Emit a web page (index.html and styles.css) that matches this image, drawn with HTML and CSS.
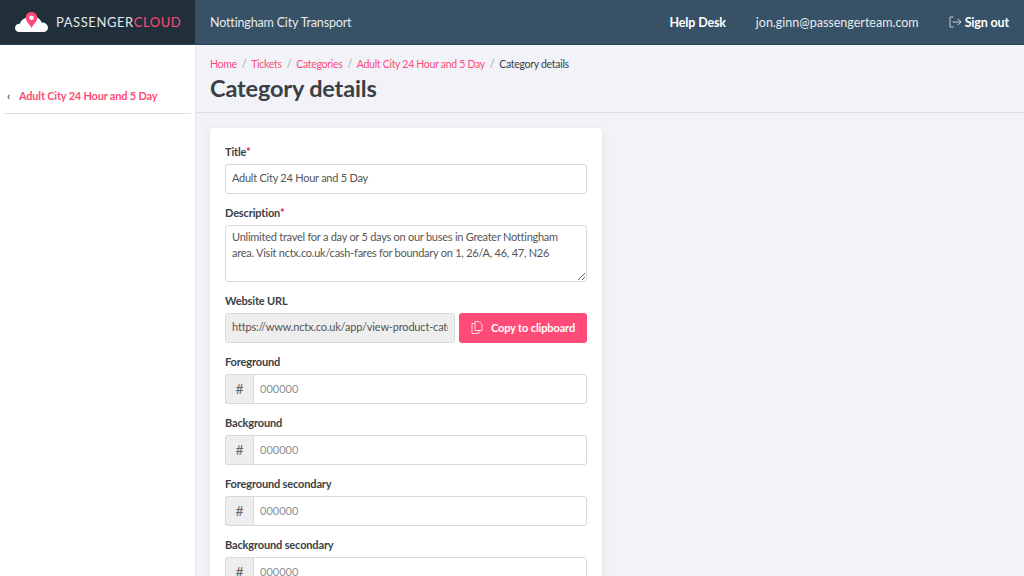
FILE: index.html
```html
<!DOCTYPE html>
<html lang="en">
    <head>
        <meta charset="UTF-8" />
        <meta name="viewport" content="width=device-width, initial-scale=1.0" />
        <title>Category details</title>
        <link rel="stylesheet" href="styles.css">
    </head>
    <body>
        <header class="topbar">
            <a class="brand" href="#">
                <svg class="brand-logo" width="36" height="24" viewBox="0 0 36 24">
                    <path d="M4.500 22 C1.500 22 0 20 0 18 C0 15.500 2 13.500 4.800 13.700 C6 10 9 8 12 7.500 L22 7.500 C24.500 8.500 26 10.500 26.500 12.500 C30 12 33 14.500 33 18 C33 20.300 31 22 28.500 22 Z" fill="#fff"/>
                    <path d="M16.500 2 C13 2 10.700 4.700 10.700 7.700 C10.700 11.500 15 14.500 16.500 18 C18 14.500 22.300 11.500 22.300 7.700 C22.300 4.700 20 2 16.500 2 Z" fill="#ff4b78"/>
                    <circle cx="16.500" cy="7.700" r="2.300" fill="#fff"/>
                </svg>
                <span class="brand-name">PASSENGER<span class="brand-cloud">CLOUD</span></span>
            </a>
            <div class="topbar-main">
                <span class="org-name">Nottingham City Transport</span>
                <nav class="topbar-nav">
                    <a class="nav-strong" href="#">Help Desk</a>
                    <span class="nav-user">jon.ginn@passengerteam.com</span>
                    <a class="nav-strong nav-signout" href="#">
                        <svg width="13" height="12" viewBox="0 0 13 12" fill="none" stroke="#fff" stroke-width="0.9" stroke-opacity="0.8">
                            <path d="M4.500 1 H1 V11 H4.500"/>
                            <path d="M3.500 6 H12 M8.800 2.800 L12 6 L8.800 9.200"/>
                        </svg>
                        Sign out
                    </a>
                </nav>
            </div>
        </header>
        <div class="layout">
            <aside class="sidebar">
                <a class="side-link" href="#"><span class="side-arrow">&lsaquo;</span>Adult City 24 Hour and 5 Day</a>
            </aside>
            <main class="content">
                <div class="page-head">
                    <ol class="crumbs">
                        <li><a href="#">Home</a></li>
                        <li><a href="#">Tickets</a></li>
                        <li><a href="#">Categories</a></li>
                        <li><a href="#">Adult City 24 Hour and 5 Day</a></li>
                        <li>Category details</li>
                    </ol>
                    <h1>Category details</h1>
                </div>
                <form class="card">
                    <div class="field">
                        <label>Title<span class="req">*</span></label>
                        <input class="input" type="text" value="Adult City 24 Hour and 5 Day" />
                    </div>
                    <div class="field">
                        <label>Description<span class="req">*</span></label>
                        <textarea class="input area">Unlimited travel for a day or 5 days on our buses in Greater Nottingham area. Visit nctx.co.uk/cash-fares for boundary on 1, 26/A, 46, 47, N26</textarea>
                    </div>
                    <div class="field">
                        <label>Website URL</label>
                        <div class="url-row">
                            <input class="input readonly" type="text" readonly value="https://www.nctx.co.uk/app/view-product-categories" />
                            <button class="copy" type="button">
                                <svg width="12" height="13" viewBox="0 0 12 13" fill="none" stroke="#fff" stroke-width="0.9" stroke-opacity="0.85">
                                    <path d="M4 0.500 H8 L11 3.500 V9.500 H4 Z"/>
                                    <path d="M4 2.500 H1 V12.500 H8 V9.500"/>
                                </svg>
                                Copy to clipboard
                            </button>
                        </div>
                    </div>
                    <div class="field">
                        <label>Foreground</label>
                        <div class="group"><span class="hash">#</span><input class="input" type="text" placeholder="000000" /></div>
                    </div>
                    <div class="field">
                        <label>Background</label>
                        <div class="group"><span class="hash">#</span><input class="input" type="text" placeholder="000000" /></div>
                    </div>
                    <div class="field">
                        <label>Foreground secondary</label>
                        <div class="group"><span class="hash">#</span><input class="input" type="text" placeholder="000000" /></div>
                    </div>
                    <div class="field">
                        <label>Background secondary</label>
                        <div class="group"><span class="hash">#</span><input class="input" type="text" placeholder="000000" /></div>
                    </div>
                </form>
            </main>
        </div>
    </body>
</html>
```

FILE: styles.css
```css
* {
    box-sizing: border-box;
}
html, body {
    height: 100%;
    overflow: hidden;
}
body {
    margin: 0;
    font-family: Lato, Arial, sans-serif;
    font-size: 12px;
    color: #3b4046;
    background-color: #f1f3f8;
}
a {
    text-decoration: none;
    color: #ff4b78;
}
.topbar {
    display: flex;
    height: 45px;
    background-color: #375166;
    border-bottom: 1px solid #2f4557;
}
.brand {
    display: flex;
    align-items: center;
    gap: 5px;
    width: 195px;
    padding-left: 15px;
    background-color: #212f3b;
}
.brand-name {
    font-size: 13px;
    letter-spacing: 0.570px;
    color: #e4e7ea;
}
.brand-cloud {
    color: #ff4b78;
}
.topbar-main {
    flex: 1;
    display: flex;
    align-items: center;
    justify-content: space-between;
    padding: 0 15px;
    color: #e6eaee;
    font-size: 12.500px;
}
.org-name {
    letter-spacing: -0.160px;
}
.topbar-nav {
    display: flex;
    align-items: center;
    gap: 30px;
}
.nav-strong {
    color: #fff;
    font-weight: 700;
    letter-spacing: -0.150px;
}
.nav-signout {
    display: flex;
    align-items: center;
    gap: 3px;
}
.layout {
    display: flex;
    height: 531px;
}
.sidebar {
    width: 196px;
    padding: 38px 4px 0;
    background-color: #fff;
    border-right: 1px solid #e4e6ea;
}
.side-link {
    display: block;
    height: 31px;
    padding-left: 3px;
    font-weight: 700;
    font-size: 11px;
    letter-spacing: -0.200px;
    line-height: 25px;
    border-bottom: 1px solid #dcdfe3;
}
.side-arrow {
    display: inline-block;
    width: 12px;
    color: #555;
}
.content {
    flex: 1;
}
.page-head {
    height: 68px;
    padding: 12px 14px 0;
    border-bottom: 1px solid #dcdfe3;
}
.crumbs {
    display: flex;
    margin: 0;
    padding: 0;
    list-style: none;
    font-size: 10.500px;
    letter-spacing: -0.300px;
    line-height: 15px;
}
.crumbs li + li::before {
    content: "/";
    padding: 0 5px;
    color: #9aa0a6;
}
h1 {
    margin: 0;
    font-size: 23.500px;
    letter-spacing: -0.150px;
    line-height: 32px;
    font-weight: 700;
}
.card {
    width: 392px;
    margin: 15px 0 0 14px;
    padding: 15px;
    background-color: #fff;
    border-radius: 4px;
    box-shadow: 0 1px 8px rgba(0, 0, 0, 0.07);
}
.field {
    margin-bottom: 10px;
}
label {
    display: block;
    height: 21px;
    font-size: 11px;
    letter-spacing: -0.150px;
    line-height: 18px;
    font-weight: 700;
}
.req {
    color: #d8274f;
}
.input {
    display: block;
    width: 100%;
    height: 30px;
    padding: 0 6px 3px;
    font-family: inherit;
    font-size: 11px;
    letter-spacing: -0.250px;
    color: #555;
    background-color: #fff;
    border: 1px solid #d6d8da;
    border-radius: 3px;
    outline: none;
}
.input::placeholder {
    color: #8b8f93;
    letter-spacing: 0;
}
.area {
    height: 57px;
    padding: 3px 6px;
    line-height: 16px;
    resize: vertical;
}
.url-row {
    display: flex;
    gap: 4px;
}
.readonly {
    flex: 1;
    min-width: 0;
    letter-spacing: -0.180px;
    background-color: #eeeeee;
}
.copy {
    display: flex;
    align-items: center;
    justify-content: center;
    gap: 8px;
    flex: none;
    width: 128px;
    height: 30px;
    padding: 0 0 2px;
    font-family: inherit;
    font-size: 11px;
    letter-spacing: -0.120px;
    font-weight: 700;
    color: #fff;
    background-color: #ff4b78;
    border: none;
    border-radius: 3px;
}
.group {
    display: flex;
}
.hash {
    flex: none;
    width: 28px;
    height: 30px;
    font-size: 14px;
    line-height: 28px;
    text-align: center;
    color: #666;
    background-color: #eeeeee;
    border: 1px solid #d6d8da;
    border-right: none;
    border-radius: 3px 0 0 3px;
}
.group .input {
    padding-bottom: 1px;
    border-radius: 0 3px 3px 0;
}
```
